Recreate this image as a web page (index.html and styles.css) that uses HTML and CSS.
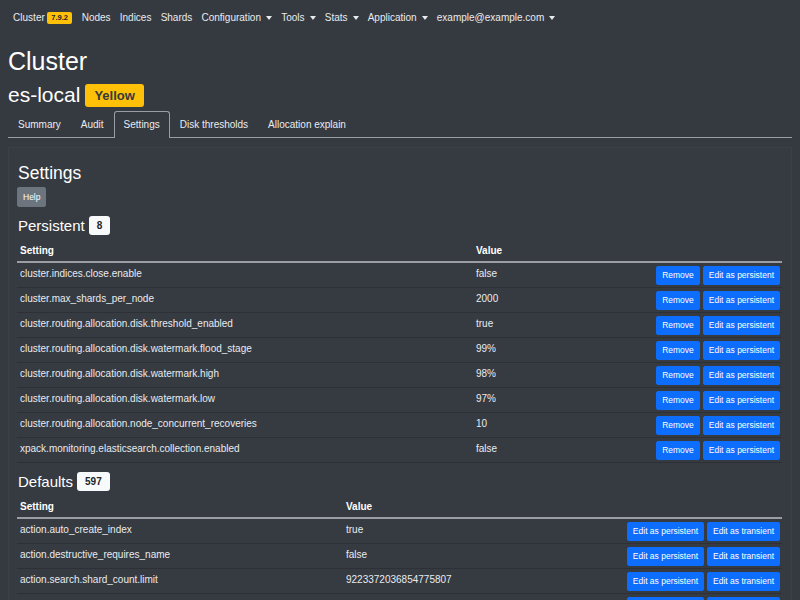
FILE: index.html
```html
<!DOCTYPE html>
<html>
<head>
<meta charset="utf-8">
<link rel="stylesheet" href="styles.css">
</head>
<body>
<nav class="navbar">
  <a class="nav-link brand">Cluster<span class="ver">7.9.2</span></a>
  <a class="nav-link">Nodes</a>
  <a class="nav-link">Indices</a>
  <a class="nav-link">Shards</a>
  <a class="nav-link dd">Configuration</a>
  <a class="nav-link dd">Tools</a>
  <a class="nav-link dd">Stats</a>
  <a class="nav-link dd">Application</a>
  <a class="nav-link dd">example@example.com</a>
</nav>
<main class="page">
  <h1 class="title">Cluster</h1>
  <div class="subtitle"><span>es-local</span><span class="status">Yellow</span></div>
  <ul class="tabs">
    <li class="tab">Summary</li>
    <li class="tab">Audit</li>
    <li class="tab active">Settings</li>
    <li class="tab">Disk thresholds</li>
    <li class="tab">Allocation explain</li>
  </ul>
  <section class="card">
    <h3 class="card-title">Settings</h3>
    <button class="btn btn-grey">Help</button>
    <h4 class="section-title">Persistent <span class="count">8</span></h4>
    <table class="tbl">
      <colgroup><col class="c1p"><col><col></colgroup>
      <thead><tr><th>Setting</th><th>Value</th><th></th></tr></thead>
      <tbody>
        <tr><td>cluster.indices.close.enable</td><td>false</td><td class="acts"><button class="btn">Remove</button><button class="btn">Edit as persistent</button></td></tr>
        <tr><td>cluster.max_shards_per_node</td><td>2000</td><td class="acts"><button class="btn">Remove</button><button class="btn">Edit as persistent</button></td></tr>
        <tr><td>cluster.routing.allocation.disk.threshold_enabled</td><td>true</td><td class="acts"><button class="btn">Remove</button><button class="btn">Edit as persistent</button></td></tr>
        <tr><td>cluster.routing.allocation.disk.watermark.flood_stage</td><td>99%</td><td class="acts"><button class="btn">Remove</button><button class="btn">Edit as persistent</button></td></tr>
        <tr><td>cluster.routing.allocation.disk.watermark.high</td><td>98%</td><td class="acts"><button class="btn">Remove</button><button class="btn">Edit as persistent</button></td></tr>
        <tr><td>cluster.routing.allocation.disk.watermark.low</td><td>97%</td><td class="acts"><button class="btn">Remove</button><button class="btn">Edit as persistent</button></td></tr>
        <tr><td>cluster.routing.allocation.node_concurrent_recoveries</td><td>10</td><td class="acts"><button class="btn">Remove</button><button class="btn">Edit as persistent</button></td></tr>
        <tr><td>xpack.monitoring.elasticsearch.collection.enabled</td><td>false</td><td class="acts"><button class="btn">Remove</button><button class="btn">Edit as persistent</button></td></tr>
      </tbody>
    </table>
    <h4 class="section-title">Defaults <span class="count">597</span></h4>
    <table class="tbl">
      <colgroup><col class="c1d"><col><col></colgroup>
      <thead><tr><th>Setting</th><th>Value</th><th></th></tr></thead>
      <tbody>
        <tr><td>action.auto_create_index</td><td>true</td><td class="acts"><button class="btn">Edit as persistent</button><button class="btn">Edit as transient</button></td></tr>
        <tr><td>action.destructive_requires_name</td><td>false</td><td class="acts"><button class="btn">Edit as persistent</button><button class="btn">Edit as transient</button></td></tr>
        <tr><td>action.search.shard_count.limit</td><td>9223372036854775807</td><td class="acts"><button class="btn">Edit as persistent</button><button class="btn">Edit as transient</button></td></tr>
        <tr><td>action.search.global_max_keep_alive</td><td>-1</td><td class="acts"><button class="btn">Edit as persistent</button><button class="btn">Edit as transient</button></td></tr>
      </tbody>
    </table>
  </section>
</main>
</body>
</html>
```

FILE: styles.css
```css
html, body {
  margin: 0;
  padding: 0;
  background: #353940;
  color: #f1f3f5;
  font-family: "Liberation Sans", Arial, sans-serif;
  height: 600px;
  overflow: hidden;
}

.navbar {
  display: flex;
  align-items: center;
  height: 35px;
  padding: 0 6px 0 8.5px;
  font-size: 10px;
}

.nav-link {
  padding: 0 4.6px;
  color: #e9ecef;
  white-space: nowrap;
  display: flex;
  align-items: center;
}

.ver {
  background: #ffc107;
  color: #212529;
  font-weight: bold;
  font-size: 7.5px;
  padding: 2px 4.5px;
  border-radius: 2px;
  margin-left: 2px;
  line-height: 8px;
}

.dd::after {
  content: "";
  display: inline-block;
  margin-left: 5px;
  border-top: 4px solid #e9ecef;
  border-left: 3px solid transparent;
  border-right: 3px solid transparent;
}

.page {
  padding: 0 8px;
}

.title {
  margin: 11px 0 0;
  font-size: 25px;
  line-height: 30px;
  font-weight: 500;
  color: #fff;
}

.subtitle {
  display: flex;
  align-items: center;
  margin-top: 7px;
  font-size: 21px;
  line-height: 24px;
  color: #fff;
}

.status {
  margin-left: 5px;
  background: #ffc107;
  color: #343a40;
  font-weight: bold;
  font-size: 13px;
  line-height: 15px;
  padding: 4px 9px;
  border-radius: 3px;
}

.tabs {
  list-style: none;
  margin: 4px 0 0;
  padding: 0;
  display: flex;
  border-bottom: 1px solid #9a9ea4;
  font-size: 10px;
}

.tab {
  padding: 5px 9px;
  line-height: 15px;
  color: #e9ecef;
  border: 1px solid transparent;
  border-bottom: none;
  margin-bottom: -1px;
  border-top-left-radius: 3px;
  border-top-right-radius: 3px;
}

.tab.active {
  border-color: #9a9ea4;
  background: #353940;
  padding-bottom: 6px;
}

.card {
  margin-top: 9px;
  padding: 8px 9px 20px 8px;
  background: #363a41;
  border-left: 1px solid #3c4048;
  border-right: 1px solid #3c4048;
  border-top: 1px solid #3c4048;
}

.card-title {
  margin: 7px 0 3px;
  font-size: 17.5px;
  line-height: 21px;
  font-weight: 500;
  color: #fff;
  padding-left: 1px;
}

.btn {
  font-family: "Liberation Sans", Arial, sans-serif;
  font-size: 8.5px;
  line-height: 13px;
  padding: 2px 5px;
  border: 1px solid #0d6efd;
  background: #0d6efd;
  color: #fff;
  border-radius: 2px;
  margin: 0;
  vertical-align: top;
}

.btn + .btn {
  margin-left: 3px;
}

.btn-grey {
  display: block;
  background: #6c757d;
  border-color: #6c757d;
  padding: 2.5px 5px;
}

.section-title {
  display: flex;
  align-items: center;
  margin: 9px 0 5px;
  font-size: 15px;
  line-height: 18px;
  font-weight: 500;
  color: #fff;
  padding-left: 1px;
}

.count {
  margin-left: 4px;
  background: #f8f9fa;
  color: #212529;
  font-size: 10px;
  font-weight: bold;
  line-height: 13px;
  padding: 3px 8px;
  border-radius: 3px;
}

.tbl {
  width: 100%;
  border-collapse: collapse;
  font-size: 10px;
  color: #e9ecef;
}

.c1p { width: 456px; }
.c1d { width: 326px; }

.tbl th {
  text-align: left;
  font-weight: bold;
  color: #fff;
  padding: 3px 3px;
  line-height: 15px;
  border-bottom: 2px solid #9a9ea4;
}

.tbl td {
  padding: 2.5px 3px;
  line-height: 15px;
  vertical-align: top;
  border-bottom: 1px solid #2d3137;
  white-space: nowrap;
}

.tbl td.acts {
  text-align: right;
  padding: 2.5px 2px 2.5px 3px;
  font-size: 0;
  line-height: 0;
}
```
